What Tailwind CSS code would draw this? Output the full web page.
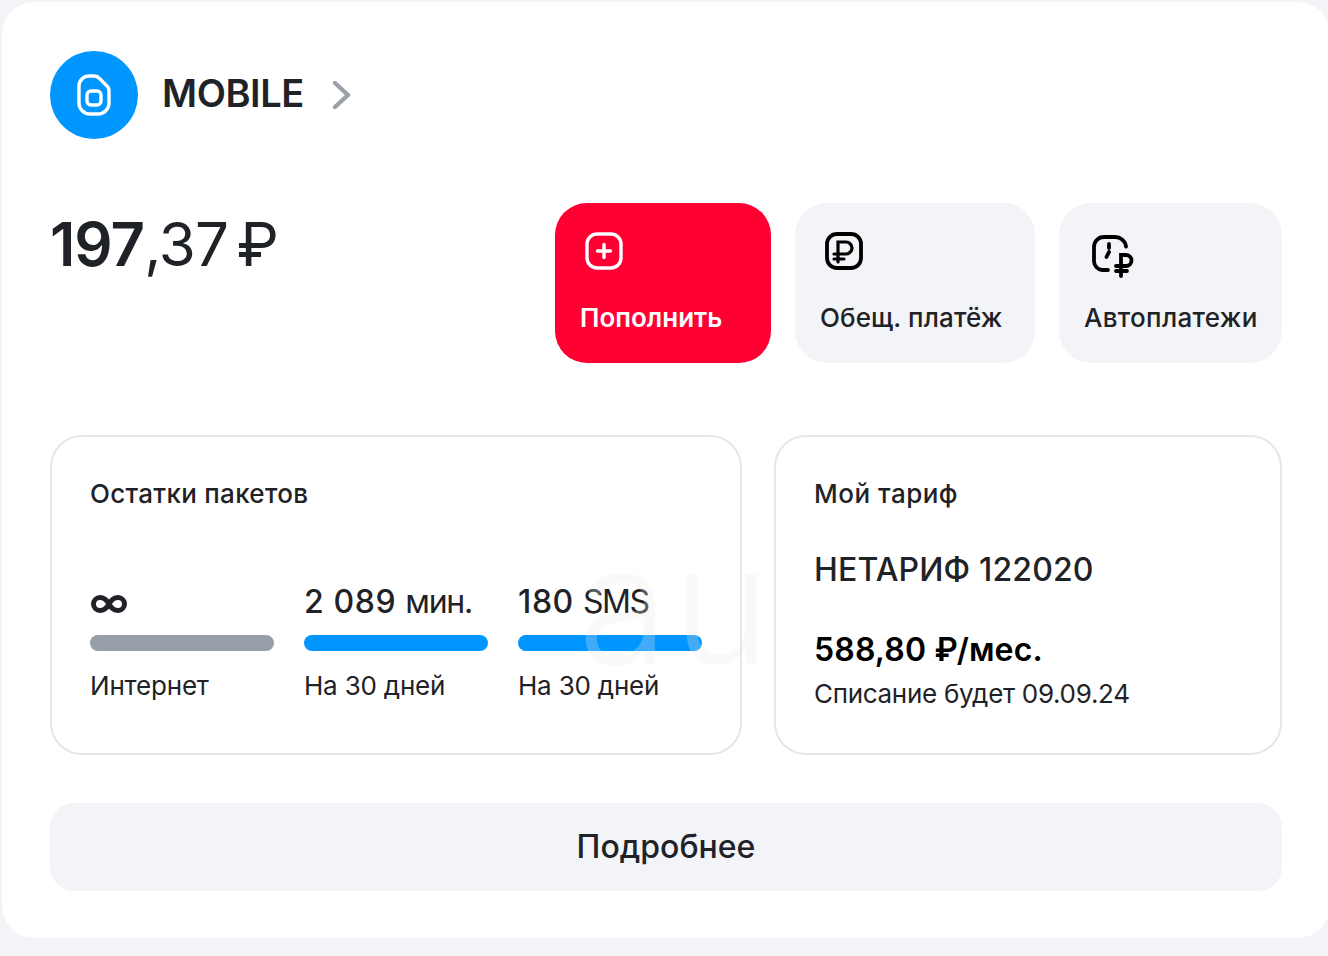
<!DOCTYPE html>
<html lang="ru">
<head>
  <meta charset="UTF-8">
  <title>MOBILE</title>
  <script src="https://cdn.jsdelivr.net/npm/@tailwindcss/browser@4"></script>
</head>
<body class="bg-[#f2f4f8] w-[1328px] h-[956px] overflow-hidden font-['Inter',sans-serif] text-[#1f2226]">
  <div class="relative mt-[2px] ml-[2px] w-[1328px] h-[936px] bg-white rounded-[32px] pt-[49px] px-[48px]">
    <!-- шапка -->
    <div class="flex items-center h-[88px]">
      <div class="w-[88px] h-[88px] rounded-full bg-[#0096ff] flex items-center justify-center">
        <svg width="36" height="44" viewBox="0 0 36 44" fill="none" stroke="#fff" stroke-width="3.4">
          <path d="M3 13a10 10 0 0 1 10-10h5a7 7 0 0 1 5 2l8 8a7 7 0 0 1 2 5V30a11 11 0 0 1-11 11H14A11 11 0 0 1 3 30z"/>
          <rect x="11" y="18" width="14" height="14" rx="4"/>
        </svg>
      </div>
      <span class="ml-[24px] mb-[3px] text-[38px] font-[560] tracking-[-0.4px]">MOBILE</span>
      <svg class="ml-[27px]" width="20" height="32" viewBox="0 0 20 32" fill="none" stroke="#9aa1a9" stroke-width="4.4" stroke-linecap="round" stroke-linejoin="round">
        <path d="M4 4l13 12L4 28"/>
      </svg>
    </div>

    <!-- баланс и кнопки -->
    <div class="flex justify-between mt-[64px]">
      <div class="text-[60px] leading-[80px] tracking-[-1px] pt-[1px]"><span class="font-semibold">197</span><span class="font-normal">,37</span><span class="font-normal ml-[9px]">₽</span></div>
      <div class="flex gap-[24px]">
        <div class="w-[216px] h-[160px] rounded-[32px] bg-[#ff0032] text-white pl-[25px] pt-[24px]">
          <svg width="48" height="48" viewBox="0 0 48 48" fill="none" stroke="#fff" stroke-width="3.4" stroke-linecap="round">
            <rect x="7" y="7" width="34" height="34" rx="10"/>
            <path d="M24 17.500v13M17.500 24h13"/>
          </svg>
          <div class="mt-[27px] text-[26px] leading-[32px] font-semibold">Пополнить</div>
        </div>
        <div class="w-[240px] h-[160px] rounded-[32px] bg-[#f2f4f8] pl-[25px] pt-[24px]">
          <svg width="48" height="48" viewBox="0 0 48 48" fill="none" stroke="#000" stroke-width="3.800" stroke-linecap="round">
            <rect x="7" y="7" width="34" height="34" rx="10"/>
            <path stroke-width="3.200" d="M18 35V15h8a6 6 0 0 1 0 12H14M14 32h10"/>
          </svg>
          <div class="mt-[27px] text-[26px] leading-[32px] font-[550] tracking-[0.1px]">Обещ. платёж</div>
        </div>
        <div class="w-[223px] h-[160px] rounded-[32px] bg-[#f2f4f8] pl-[25px] pt-[24px]">
          <svg class="ml-[3px] overflow-visible" width="48" height="48" viewBox="0 0 48 48" fill="none" stroke="#000" stroke-width="3.800" stroke-linecap="round">
            <path d="M21 43h-6a9 9 0 0 1-8-8.500V20a10 10 0 0 1 10-10h11a11 11 0 0 1 11 9.500"/>
            <path d="M22 17v4M22 25l-2.500 5"/>
            <path d="M34 49V28h5a5.500 5.500 0 0 1 0 11H29M29 44h11"/>
          </svg>
          <div class="mt-[27px] text-[26px] leading-[32px] font-[550] tracking-[0.3px]">Автоплатежи</div>
        </div>
      </div>
    </div>

    <!-- карточки -->
    <div class="flex gap-[32px] mt-[72px]">
      <div class="w-[692px] h-[320px] rounded-[32px] border-2 border-[#e4e6e9] pl-[38px] pr-[38px] pt-[39px]">
        <div class="text-[26px] leading-[36px] font-[550] tracking-[0.3px]">Остатки пакетов</div>
        <div class="grid grid-cols-3 gap-[30px] mt-[70px]">
          <div>
            <div class="h-[40px] flex items-center pt-[3px]">
              <svg width="38" height="20" viewBox="0 0 38 20" fill="none" stroke="#1f2226" stroke-width="5">
                <path d="M19 10C16.500 5.500 13.500 3.500 10 3.500a6.500 6.500 0 0 0 0 13c3.500 0 6.500-2 9-6.500s5.500-6.500 9-6.500a6.500 6.500 0 0 1 0 13c-3.500 0-6.500-2-9-6.500z"/>
              </svg>
            </div>
            <div class="h-[16px] mt-[13px] rounded-full bg-[#969fa8]"></div>
            <div class="mt-[17px] text-[26px] leading-[36px] tracking-[-0.2px]">Интернет</div>
          </div>
          <div>
            <div class="h-[40px] text-[32px] leading-[40px] whitespace-nowrap"><span class="font-[550] tracking-[0.6px]">2 089</span> <span class="tracking-[-1.2px]">мин.</span></div>
            <div class="h-[16px] mt-[13px] rounded-full bg-[#0096ff]"></div>
            <div class="mt-[17px] text-[26px] leading-[36px] tracking-[-0.2px]">На 30 дней</div>
          </div>
          <div>
            <div class="h-[40px] text-[32px] leading-[40px] whitespace-nowrap"><span class="font-[550] tracking-[0.6px]">180</span> <span class="tracking-[-1.4px]">SMS</span></div>
            <div class="h-[16px] mt-[13px] rounded-full bg-[#0096ff]"></div>
            <div class="mt-[17px] text-[26px] leading-[36px] tracking-[-0.2px]">На 30 дней</div>
          </div>
        </div>
      </div>
      <div class="w-[508px] h-[320px] rounded-[32px] border-2 border-[#e4e6e9] pl-[38px] pt-[39px]">
        <div class="text-[26px] leading-[36px] font-[550] tracking-[0.5px]">Мой тариф</div>
        <div class="mt-[38px] text-[32px] leading-[40px] font-[550] tracking-[0.15px]">НЕТАРИФ 122020</div>
        <div class="mt-[40px] text-[32px] leading-[40px] font-semibold text-black tracking-[0.15px]">588,80 ₽/мес.</div>
        <div class="mt-[6px] text-[26px] leading-[36px] tracking-[-0.3px]">Списание будет 09.09.24</div>
      </div>
    </div>

    <div class="mt-[48px] h-[88px] rounded-[24px] bg-[#f2f4f8] flex items-center justify-center text-[32px] font-[550]">Подробнее</div>

    <!-- водяной знак -->
    <div class="absolute left-[576px] top-[520px] pointer-events-none whitespace-nowrap">
      <div class="text-[165px] leading-[165px] font-light tracking-[4px] text-white/25 [text-shadow:0_0_1px_#00000008]">au</div>
      <div class="ml-[19px] -mt-[12px] text-[38px] leading-[44px] font-light tracking-[1px] text-[#00000005]">интернет-аудит</div>
    </div>
  </div>
</body>
</html>
